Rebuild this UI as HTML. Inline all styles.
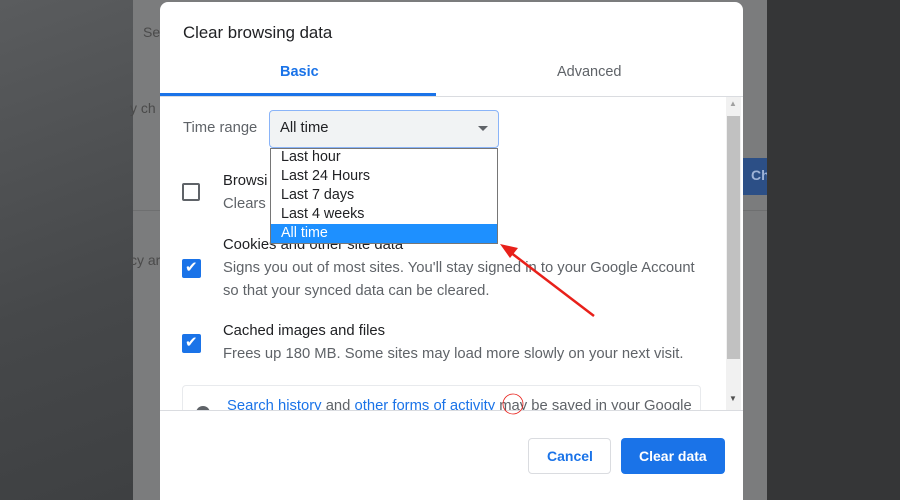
<!DOCTYPE html>
<html><head><style>
*{margin:0;padding:0;box-sizing:border-box}
body{width:900px;height:500px;overflow:hidden;position:relative;background:#4b4d4f;font-family:"Liberation Sans",sans-serif}
.a{position:absolute}
.t{position:absolute;white-space:nowrap}
.cb{position:absolute;left:182px;width:19px;height:19px;border-radius:2px}
.on{background:#1a73e8}
.off{border:2px solid #5f6368}
.g{color:#5f6368;font-size:14.8px}
.d{color:#202124;font-size:14.8px}
</style></head><body>
<div class="a" style="left:0;top:0;width:133px;height:500px;background:linear-gradient(160deg,#5a5c5e,#46484a 60%,#3e4042)"></div>
<div class="a" style="left:133px;top:0;width:634px;height:500px;background:#7b7c7d"></div>
<div class="a" style="left:133px;top:210px;width:634px;height:1px;background:#6e6f70"></div>
<div class="a" style="left:743px;top:158px;width:24px;height:37px;background:#2c4f86"></div>
<div class="t" style="left:751px;top:167px;color:#9fb3d6;font-size:14px;font-weight:bold">Ch</div>
<div class="a" style="left:767px;top:0;width:133px;height:500px;background:#353637"></div>
<div class="t" style="left:143px;top:24px;color:#4a4a4a;font-size:14px">Se</div>
<div class="t" style="left:130px;top:100px;color:#4a4a4a;font-size:14px">y ch</div>
<div class="t" style="left:130px;top:252px;color:#4a4a4a;font-size:14px">cy ar</div>
<div class="a" style="left:160px;top:2px;width:583px;height:498px;background:#fff;border-radius:8px 8px 0 0"></div>
<div class="t" style="left:183px;top:23px;font-size:16.8px;color:#202124">Clear browsing data</div>
<div class="t" style="left:280px;top:64px;font-size:14.5px;color:#1a73e8;font-weight:bold">Basic</div>
<div class="t" style="left:557px;top:64px;font-size:14.5px;color:#5f6368">Advanced</div>
<div class="a" style="left:160px;top:96px;width:583px;height:1px;background:#dadce0"></div>
<div class="a" style="left:160px;top:93px;width:276px;height:3px;background:#1a73e8"></div>
<div class="a" style="left:726px;top:97px;width:15px;height:313px;background:#f1f1f1"></div>
<div class="a" style="left:727px;top:116px;width:13px;height:243px;background:#c1c1c1"></div>
<div class="t" style="left:729px;top:99px;font-size:8px;color:#a0a0a0">▲</div>
<div class="t" style="left:729px;top:394px;font-size:8px;color:#505050">▼</div>
<div class="t g" style="left:183px;top:120px">Time range</div>
<div class="a" style="left:269px;top:110px;width:230px;height:38px;border:1px solid #8ab4f8;border-radius:4px;background:#f1f3f4"></div>
<div class="t d" style="left:280px;top:120px">All time</div>
<div class="a" style="left:478px;top:126px;width:0;height:0;border-left:5px solid transparent;border-right:5px solid transparent;border-top:5px solid #5f6368"></div>
<div class="cb off" style="top:183px;width:18px;height:18px"></div>
<div class="t d" style="left:223px;top:173px">Browsi</div>
<div class="t g" style="left:223px;top:196px">Clears</div>
<div class="cb on" style="top:259px"></div>
<div class="t" style="left:185px;top:258px;color:#fff;font-size:15px">✔</div>
<div class="t d" style="left:223px;top:237px">Cookies and other site data</div>
<div class="t g" style="left:223px;top:260px">Signs you out of most sites. You'll stay signed in to your Google Account</div>
<div class="t g" style="left:223px;top:283px">so that your synced data can be cleared.</div>
<div class="cb on" style="top:334px"></div>
<div class="t" style="left:185px;top:333px;color:#fff;font-size:15px">✔</div>
<div class="t d" style="left:223px;top:323px">Cached images and files</div>
<div class="t g" style="left:223px;top:346px">Frees up 180 MB. Some sites may load more slowly on your next visit.</div>
<div class="a" style="left:182px;top:385px;width:519px;height:30px;border:1px solid #e8eaed;border-radius:4px"></div>
<div class="a" style="left:196px;top:406px;width:14px;height:14px;border-radius:50%;background:#5f6368"></div>
<div class="t" style="left:227px;top:398px;font-size:14.8px;color:#5f6368"><span style="color:#1a73e8">Search history</span> and <span style="color:#1a73e8">other forms of activity</span> may be saved in your Google</div>
<div class="a" style="left:160px;top:410px;width:583px;height:90px;background:#fff;border-top:1px solid #dadce0"></div>
<div class="a" style="left:528px;top:438px;width:83px;height:36px;border:1px solid #dadce0;border-radius:4px"></div>
<div class="t" style="left:547px;top:448px;font-size:14px;color:#1a73e8;font-weight:bold">Cancel</div>
<div class="a" style="left:621px;top:438px;width:104px;height:36px;background:#1a73e8;border-radius:4px"></div>
<div class="t" style="left:639px;top:448px;font-size:14px;color:#fff;font-weight:bold">Clear data</div>
<div class="a" style="left:270px;top:148px;width:228px;height:96px;background:#fff;border:1px solid #767676"></div>
<div class="t d" style="left:281px;top:149px;font-size:14.3px">Last hour</div>
<div class="t d" style="left:281px;top:168px;font-size:14.3px">Last 24 Hours</div>
<div class="t d" style="left:281px;top:187px;font-size:14.3px">Last 7 days</div>
<div class="t d" style="left:281px;top:206px;font-size:14.3px">Last 4 weeks</div>
<div class="a" style="left:271px;top:224px;width:226px;height:19px;background:#1e90ff"></div>
<div class="t" style="left:281px;top:225px;font-size:14.3px;color:#fff">All time</div>
<svg class="a" style="left:0;top:0" width="900" height="500">
<line x1="594" y1="316" x2="510" y2="252" stroke="#e8201a" stroke-width="2.5"/>
<polygon points="500,244 518,248 510,258" fill="#e8201a"/>
<circle cx="513" cy="404" r="10" fill="none" stroke="#e8201a" stroke-width="0.8"/>
</svg>
</body></html>
